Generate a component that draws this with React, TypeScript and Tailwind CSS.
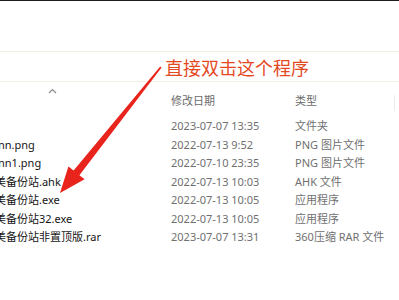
import React from "react";

const rows = [
  { name: "", nameCls: "", date: "2023-07-07 13:35", type: "文件夹" },
  { name: "nn.png", nameCls: "-ml-[2px]", date: "2022-07-13 9:52", type: "PNG 图片文件" },
  { name: "nn1.png", nameCls: "-ml-[2px]", date: "2022-07-10 23:35", type: "PNG 图片文件" },
  { name: "美备份站.ahk", nameCls: "-ml-[5px]", date: "2022-07-13 10:03", type: "AHK 文件" },
  { name: "美备份站.exe", nameCls: "-ml-[5px]", date: "2022-07-13 10:05", type: "应用程序" },
  { name: "美备份站32.exe", nameCls: "-ml-[5px]", date: "2022-07-13 10:05", type: "应用程序" },
  { name: "美备份站非置顶版.rar", nameCls: "-ml-[5px]", date: "2023-07-07 13:31", type: "360压缩 RAR 文件" },
];

export default function App() {
  return (
    <div
      className="relative w-[399px] h-[300px] overflow-hidden bg-white"
      style={{ fontFamily: '"Noto Sans", "Noto Sans CJK SC", sans-serif' }}
    >
      <div className="h-px bg-[#1c1c1c]" />
      <div className="h-[50px]" />
      <div className="h-[31px] border-y border-[#f2eee2]" />
      <div className="relative h-[35px]">
        <svg className="absolute left-[48px] top-[6px]" width="9" height="6" viewBox="0 0 9 6">
          <path d="M1 5 L4.5 1.5 L8 5" fill="none" stroke="#8a8a8a" strokeWidth="1.2" />
        </svg>
        <div className="flex h-full items-center pt-[3px] text-[11px] text-[#6b6b6b]">
          <div className="w-[171px]" />
          <div className="w-[124px]">修改日期</div>
          <div>类型</div>
        </div>
        <div className="absolute left-[394px] top-[13px] h-[16px] w-px bg-[#ececec]" />
      </div>
      <div className="flex flex-col">
        {rows.map((r, i) => (
          <div key={i} className="flex h-[18.5px] items-center text-[11px] leading-[18.5px] whitespace-nowrap">
            <div className="w-[171px] overflow-hidden">
              <div className={`${r.nameCls} text-[#151515]`}>{r.name}</div>
            </div>
            <div className="w-[124px] text-[#707070]">{r.date}</div>
            <div className="text-[#707070]">{r.type}</div>
          </div>
        ))}
      </div>

      <div
        className="absolute left-[165px] top-[55px] text-[18px] leading-[24px] text-[#e4491f] whitespace-nowrap"
        style={{ fontFamily: '"Noto Sans CJK SC", sans-serif' }}
      >
        直接双击这个程序
      </div>

      <svg className="absolute left-0 top-0" width="399" height="300" viewBox="0 0 399 300">
        <polygon
          points="160.2,66.6 161.6,67.6 79.4,175.2 84.6,179.2 60,193 68.4,166.4 73.6,170.4"
          fill="#e8241c"
        />
      </svg>
    </div>
  );
}
